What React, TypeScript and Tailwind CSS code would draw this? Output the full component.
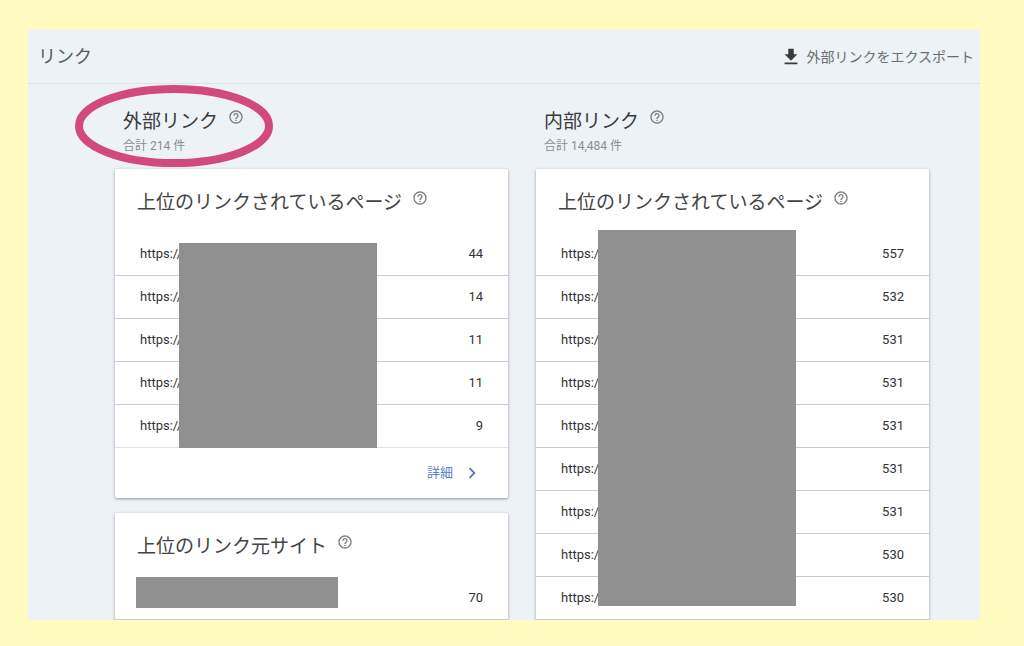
import React from "react";
import { MdChevronRight, MdGetApp, MdHelpOutline } from "react-icons/md";

type Row = {
  url: string;
  count: number;
};

type LinkCardProps = {
  title: string;
  rows: Row[];
  maskClass: string;
  detailHref?: string;
};

const externalPages: Row[] = [44, 14, 11, 11, 9].map((count) => ({
  url: "https://",
  count,
}));

const externalSites: Row[] = [{ url: "", count: 70 }];

const internalPages: Row[] = [557, 532, 531, 531, 531, 531, 531, 530, 530].map(
  (count) => ({ url: "https://", count })
);

const HelpButton = ({ label }: { label: string }) => (
  <button
    type="button"
    aria-label={`${label} ヘルプ`}
    className="mb-2.5 shrink-0 text-[#7c7c7c]"
  >
    <MdHelpOutline size={16} />
  </button>
);

const LinkCard = ({ title, rows, maskClass, detailHref }: LinkCardProps) => (
  <section className="rounded-xs bg-white shadow-[0_1px_3px_rgba(60,50,80,0.5)]">
    <div className="flex h-16 items-center gap-2.5 pt-1 pl-[22px]">
      <h3 className="text-[19px] leading-6 text-[#444]">{title}</h3>
      <HelpButton label={title} />
    </div>
    <div className="relative">
      <table className="w-full border-separate border-spacing-0 text-[13px] text-[#333]">
        <tbody>
          {rows.map((row, index) => (
            <tr key={index} className="h-[43px]">
              <td
                className={
                  detailHref && index === rows.length - 1
                    ? "border-b border-[#e4e4e4] pl-[25px]"
                    : "border-b border-[#cccccc] pl-[25px]"
                }
              >
                {row.url}
              </td>
              <td
                className={
                  detailHref && index === rows.length - 1
                    ? "border-b border-[#e4e4e4] pr-[25px] text-right"
                    : "border-b border-[#cccccc] pr-[25px] text-right"
                }
              >
                {row.count}
              </td>
            </tr>
          ))}
        </tbody>
      </table>
      <div className={`absolute bg-[#909090] ${maskClass}`} />
    </div>
    {detailHref && (
      <div className="flex h-[50px] items-center justify-end pr-[25px]">
        <a
          href={detailHref}
          className="flex items-center gap-2 text-[13px] text-[#5b82c8]"
        >
          詳細
          <MdChevronRight size={22} className="text-[#5f74b8]" />
        </a>
      </div>
    )}
  </section>
);

const ColumnHeading = ({ title, total }: { title: string; total: string }) => (
  <div className="mb-[11px] pl-2">
    <div className="flex h-7 items-center gap-2.5 pt-1">
      <h2 className="text-[19px] leading-6 text-[#3a3a3a]">{title}</h2>
      <HelpButton label={title} />
    </div>
    <p className="text-xs leading-6 text-[#8a8d90]">合計 {total} 件</p>
  </div>
);

const App = () => {
  return (
    <div className="flex h-screen flex-col bg-[#fffabf] pt-[30px] pr-11 pb-[26px] pl-7 font-[Roboto,'Noto_Sans_CJK_JP',sans-serif]">
      <main className="min-h-0 flex-1 overflow-hidden bg-[#edf2f6]">
        <header className="flex h-[54px] items-center justify-between border-b border-[#dde3e7] pr-1.5 pl-2.5">
          <h1 className="text-lg text-[#5a5a5a]">リンク</h1>
          <button
            type="button"
            className="flex items-center gap-1 text-sm leading-5 text-[#6c6c6c]"
          >
            <MdGetApp size={22} className="text-[#3a3a3a]" />
            外部リンクをエクスポート
          </button>
        </header>

        <div className="grid grid-cols-2 gap-7 pt-[22px] pr-[51px] pl-[87px]">
          <div>
            <div className="relative">
              <ColumnHeading title="外部リンク" total="214" />
              <svg
                className="pointer-events-none absolute -top-[21px] -left-10"
                width="198"
                height="82"
                viewBox="0 0 198 82"
                fill="none"
              >
                <ellipse
                  cx="99"
                  cy="41"
                  rx="95"
                  ry="37"
                  stroke="#d2497b"
                  strokeWidth="8"
                />
              </svg>
            </div>
            <div className="flex flex-col gap-[15px]">
              <LinkCard
                title="上位のリンクされているページ"
                rows={externalPages}
                maskClass="top-2.5 bottom-0 left-16 w-[198px]"
                detailHref="#pages"
              />
              <LinkCard
                title="上位のリンク元サイト"
                rows={externalSites}
                maskClass="top-0 bottom-3 left-[21px] w-[202px]"
              />
            </div>
          </div>

          <div>
            <ColumnHeading title="内部リンク" total="14,484" />
            <LinkCard
              title="上位のリンクされているページ"
              rows={internalPages}
              maskClass="-top-[3px] bottom-3.5 left-[62px] w-[198px]"
            />
          </div>
        </div>
      </main>
    </div>
  );
};

export default App;
